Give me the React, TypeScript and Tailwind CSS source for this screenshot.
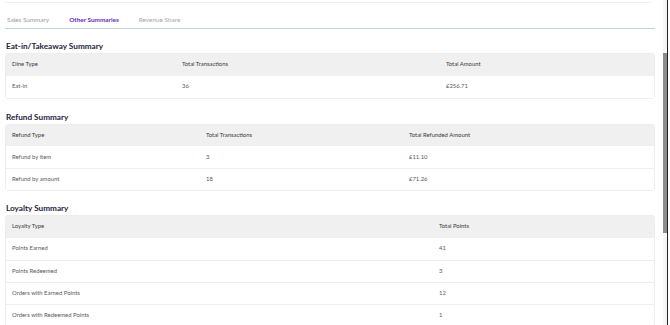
import React from "react";

const font = { fontFamily: 'Lato, "Open Sans", "Noto Sans", sans-serif' };

type Table = { cols: string[]; widths: string[]; rows: string[][] };

function SummaryTable({ title, table }: { title: string; table: Table }) {
  return (
    <div>
      <div className="text-[8.2px] font-bold text-[#241c3c] leading-[11px] pl-[1px]">{title}</div>
      <div className="mt-[1px] rounded-[3px] border border-[#ededed] overflow-hidden">
        <div className="flex h-[21.5px] items-center bg-[#f0f0f0] text-[5.9px] text-[#3a3a3a]">
          {table.cols.map((c, i) => (
            <div key={i} className="pl-[6px]" style={{ width: table.widths[i] }}>
              {c}
            </div>
          ))}
        </div>
        {table.rows.map((r, ri) => (
          <div
            key={ri}
            className={`flex h-[22px] items-center bg-white text-[5.9px] text-[#5a5a5a] ${
              ri > 0 ? "border-t border-[#efefef]" : ""
            }`}
          >
            {r.map((c, i) => (
              <div key={i} className="pl-[6px]" style={{ width: table.widths[i] }}>
                {c}
              </div>
            ))}
          </div>
        ))}
      </div>
    </div>
  );
}

export default function App() {
  const eat: Table = {
    cols: ["Dine Type", "Total Transactions", "Total Amount"],
    widths: ["170px", "264px", "211px"],
    rows: [["Eat-in", "36", "£256.71"]],
  };
  const refund: Table = {
    cols: ["Refund Type", "Total Transactions", "Total Refunded Amount"],
    widths: ["194px", "203px", "248px"],
    rows: [
      ["Refund by item", "3", "£11.10"],
      ["Refund by amount", "18", "£71.26"],
    ],
  };
  const loyalty: Table = {
    cols: ["Loyalty Type", "Total Points"],
    widths: ["427px", "218px"],
    rows: [
      ["Points Earned", "41"],
      ["Points Redeemed", "3"],
      ["Orders with Earned Points", "12"],
      ["Orders with Redeemed Points", "1"],
    ],
  };
  return (
    <div className="flex h-[325px] w-[670px] overflow-hidden bg-white" style={font}>
      <div className="flex-1 pl-[5px] pr-[8px]">
        <div className="h-[3px] border-b border-[#f0f0f0] mr-[3px]" />
        <div className="flex h-[26px] items-end gap-[20px] pl-[2px] pb-[3px] text-[6.4px] border-b-[1.5px] border-[#c3d0e2]">
          <span className="text-[#9a9a9a]">Sales Summary</span>
          <span className="font-bold text-[#6a2bb5]">Other Summaries</span>
          <span className="text-[#a5a5a5]">Revenue Share</span>
        </div>
        <div className="mt-[12px]">
          <SummaryTable title="Eat-in/Takeaway Summary" table={eat} />
        </div>
        <div className="mt-[13px]">
          <SummaryTable title="Refund Summary" table={refund} />
        </div>
        <div className="mt-[12px]">
          <SummaryTable title="Loyalty Summary" table={loyalty} />
        </div>
      </div>
      <div className="flex w-[7px] shrink-0">
        <div className="w-[4px] bg-[#f5f5f5] pt-[53px]">
          <div className="h-[180px] w-[4px] bg-[#8c8c8c]" />
        </div>
        <div className="w-[1px] bg-[#222]" />
        <div className="w-[2px] bg-white" />
      </div>
    </div>
  );
}
